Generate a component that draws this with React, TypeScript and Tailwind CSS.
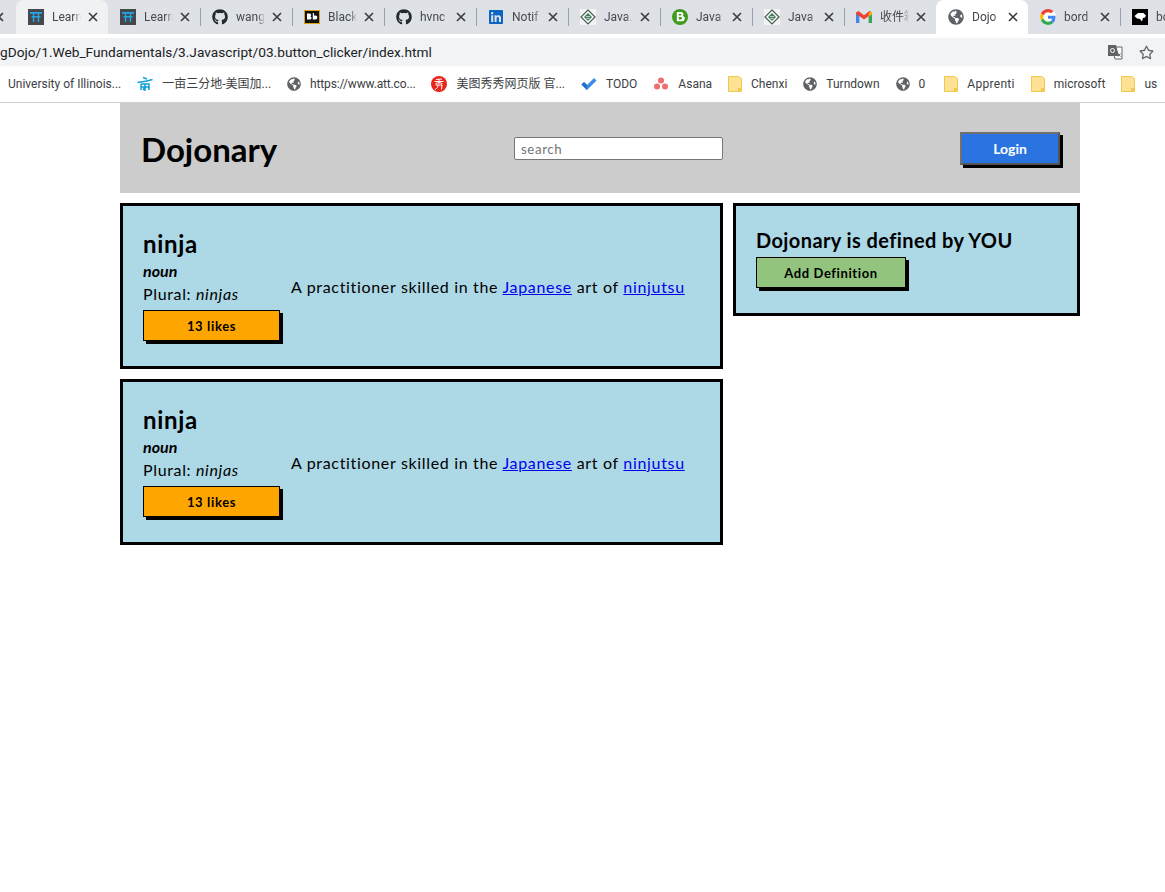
import React from "react";
import { FaGithub, FaLinkedin, FaGlobeAmericas, FaRegStar } from "react-icons/fa";

const Globe = ({ s = 16 }: { s?: number }) => <FaGlobeAmericas size={s} color="#5f6368" />;

const Torii = () => (
  <svg width="16" height="16" viewBox="0 0 16 16">
    <rect width="16" height="16" fill="#45474a" />
    <path d="M2 3h12v1.800H2zM3.500 7h9v1.500h-9zM4.800 4h1.500v9H4.800zM9.700 4h1.500v9H9.700z" fill="#23a6e8" />
  </svg>
);
const Bb = () => (
  <svg width="16" height="14" viewBox="0 0 16 14">
    <rect x="0.500" y="0.500" width="15" height="13" fill="#111" stroke="#d9a21b" />
    <path d="M3 3.500h2.300a1.400 1.400 0 0 1 .9 2.700 1.600 1.600 0 0 1-.7 3.300H3zM8.800 3h1.100v2.500h1.500a2 2 0 0 1 0 4H8.800z" fill="#fff" />
  </svg>
);
const JavaDiamond = () => (
  <svg width="16" height="16" viewBox="0 0 16 16">
    <rect width="16" height="16" fill="#f3f3f3" />
    <path d="M8 1 15 8 8 15 1 8z" fill="#fff" stroke="#46594d" strokeWidth="1.200" />
    <path d="M8 4 12 8 8 12 4 8z" fill="#3f7f5c" />
    <path d="M6 7.500h4M6.500 9.500h3" stroke="#cfe0d5" strokeWidth="0.900" />
  </svg>
);
const GreenB = () => (
  <svg width="16" height="16" viewBox="0 0 16 16">
    <circle cx="8" cy="8" r="8" fill="#3f9a1d" />
    <path fillRule="evenodd" d="M4.800 3h4.400a2.300 2.300 0 0 1 1.500 4 2.600 2.600 0 0 1-1.300 5.200H4.800zM6.800 4.700v1.800h1.700a.9.900 0 0 0 0-1.800zM6.800 8.100v2.400h2a1.200 1.200 0 0 0 0-2.400z" fill="#fff" />
  </svg>
);
const Gmail = () => (
  <svg width="16" height="12" viewBox="0 0 16 12">
    <path d="M0 1.500V12h3.200V5L8 8.500 12.800 5v7H16V1.500L13.500 0 8 4.200 2.500 0z" fill="#ea4335" />
    <path d="M0 3v9h3.200V5.500z" fill="#4285f4" />
    <path d="M16 3v9h-3.200V5.500z" fill="#34a853" />
    <path d="M12.800 2 16 0.600V3l-3.200 2.500z" fill="#fbbc05" />
  </svg>
);
const GoogleG = () => (
  <svg width="16" height="16" viewBox="0 0 48 48">
    <circle cx="24" cy="24" r="24" fill="#fff" />
    <path fill="#EA4335" d="M24 9.500c3.500 0 6.700 1.200 9.200 3.600l6.900-6.900C35.900 2.400 30.500 0 24 0 14.600 0 6.500 5.400 2.600 13.200l8 6.200C12.400 13.700 17.700 9.500 24 9.500z" />
    <path fill="#4285F4" d="M46.500 24.500c0-1.600-.1-3.100-.4-4.500H24v9h12.700c-.5 2.900-2.200 5.400-4.700 7.100l7.700 6c4.500-4.200 6.800-10.300 6.800-17.600z" />
    <path fill="#FBBC05" d="M10.500 28.600c-.5-1.400-.8-3-.8-4.600s.3-3.200.8-4.600l-8-6.200C.9 16.500 0 20.100 0 24s.9 7.500 2.600 10.800z" />
    <path fill="#34A853" d="M24 48c6.500 0 11.900-2.100 15.900-5.800l-7.700-6c-2.200 1.400-4.900 2.300-8.200 2.300-6.300 0-11.600-4.200-13.500-9.900l-8 6.200C6.500 42.600 14.600 48 24 48z" />
  </svg>
);
const BlackMark = () => (
  <svg width="16" height="16" viewBox="0 0 16 16">
    <rect width="16" height="16" fill="#000" />
    <path d="M2.500 7 6 4h5.500L14 6.500l-1 2-2 .5-1 3.500L8 10l-3-.5z" fill="#fff" />
  </svg>
);
const CheckIcon = () => (
  <svg width="16" height="14" viewBox="0 0 16 14">
    <path d="M0.500 7.500 3 5l3 3 7-7 2.500 2.500L6 13z" fill="#3a8ee8" />
    <path d="M0.500 7.500 3 5l3 3v5z" fill="#1f6fd0" />
  </svg>
);
const AsanaIcon = () => (
  <svg width="16" height="16" viewBox="0 0 16 16">
    <circle cx="8" cy="4.500" r="3" fill="#f26d6d" />
    <circle cx="4" cy="10.500" r="3" fill="#f26d6d" />
    <circle cx="12" cy="10.500" r="3" fill="#f26d6d" />
  </svg>
);
const Folder = () => (
  <svg width="14" height="16" viewBox="0 0 14 16">
    <path d="M0.500 0.500h10l3 2v13H0.500z" fill="#fde293" stroke="#f2c94c" />
    <rect x="10" y="12" width="3" height="3" fill="#f2c94c" />
  </svg>
);
const DaiIcon = () => (
  <svg width="16" height="16" viewBox="0 0 16 16">
    <path d="M6 1.500 10 3M0.500 6.500C5 6 11 5 15.500 3.500M4 8v6M4 8h8v6M4 11h8M8 8v7M6 14l2-3" stroke="#12a0d8" strokeWidth="1.500" fill="none" />
  </svg>
);
const MeituIcon = () => (
  <svg width="16" height="16" viewBox="0 0 16 16">
    <circle cx="8" cy="8" r="8" fill="#e8261c" />
    <path d="M5 3.500 11 3M3.500 5.500h9M8 3.500V8M8 6 4.500 8M8 6l3.500 2M4.500 9h6.500l-.5 4.500M7 9c0 2-1 3.500-3 4.500" stroke="#fff" strokeWidth="1" fill="none" />
  </svg>
);
const Translate = () => (
  <svg width="16" height="16" viewBox="0 0 16 16">
    <path d="M5 3h10v12H8z" fill="#fff" stroke="#5f6368" />
    <path d="M1 1h8l3 11H1z" fill="#5f6368" />
    <circle cx="5.500" cy="6.500" r="2" fill="none" stroke="#fff" />
    <path d="M11 9.500l2.500 3M13.500 9.500l-2.500 3" stroke="#5f6368" />
  </svg>
);

const tabs: { icon: React.ReactNode; title: string; active?: boolean; hover?: boolean }[] = [
  { icon: <Torii />, title: "Learn", hover: true },
  { icon: <Torii />, title: "Learn" },
  { icon: <FaGithub size={16} color="#24292e" />, title: "wang" },
  { icon: <Bb />, title: "Black" },
  { icon: <FaGithub size={16} color="#24292e" />, title: "hvnc" },
  { icon: <FaLinkedin size={16} color="#0a66c2" />, title: "Notif" },
  { icon: <JavaDiamond />, title: "Java.l" },
  { icon: <GreenB />, title: "Java S" },
  { icon: <JavaDiamond />, title: "Java -" },
  { icon: <Gmail />, title: "收件箱" },
  { icon: <Globe />, title: "Dojo", active: true },
  { icon: <GoogleG />, title: "bord" },
  { icon: <BlackMark />, title: "bo" },
];

const bookmarks: { icon?: React.ReactNode; title: string; cls?: string }[] = [
  { title: "University of Illinois..." },
  { icon: <DaiIcon />, title: "一亩三分地-美国加..." },
  { icon: <Globe s={14} />, title: "https://www.att.co...", cls: "tracking-[-0.15px]" },
  { icon: <MeituIcon />, title: "美图秀秀网页版 官..." },
  { icon: <CheckIcon />, title: "TODO" },
  { icon: <AsanaIcon />, title: "Asana" },
  { icon: <Folder />, title: "Chenxi" },
  { icon: <Globe s={14} />, title: "Turndown" },
  { icon: <Globe s={14} />, title: "0", cls: "pr-[3px]" },
  { icon: <Folder />, title: "Apprenti", cls: "tracking-[0.3px]" },
  { icon: <Folder />, title: "microsoft" },
  { icon: <Folder />, title: "us" },
];

const CloseX = () => (
  <svg width="10" height="10" viewBox="0 0 10 10" className="shrink-0">
    <path d="M1 1l8 8M9 1l-8 8" stroke="#3c4043" strokeWidth="1.700" />
  </svg>
);

const comic = "font-['Comic_Sans_MS','Lato','Noto_Sans',sans-serif]";

function Definition() {
  return (
    <div className="flex h-[166px] w-[603px] items-center border-[3px] border-black bg-[#add8e6] pl-[20px]">
      <div className="w-[148px] shrink-0 self-start pt-[20px]">
        <h2 className="text-[24px] font-bold leading-[36px] tracking-[0.7px] text-black">ninja</h2>
        <p className="-mt-[1px] text-[16px] font-bold italic leading-[20px] text-black">noun</p>
        <p className="mt-[1px] text-[16px] leading-[24px] tracking-[0.65px] text-black">
          Plural: <i>ninjas</i>
        </p>
        <button className="mt-[4px] h-[31px] w-[137px] border border-black bg-[#ffa500] pt-[2px] text-[13px] font-bold tracking-[0.65px] text-black shadow-[3px_3px_0_#000]">
          13 likes
        </button>
      </div>
      <p className="pt-[1px] text-[16px] leading-[24px] tracking-[0.67px] text-black">
        A practitioner skilled in the <a href="#" className="text-[#0000ee] underline">Japanese</a> art of{" "}
        <a href="#" className="text-[#0000ee] underline">ninjutsu</a>
      </p>
    </div>
  );
}

export default function App() {
  return (
    <div className="min-h-[892px] overflow-hidden bg-white">
      <div className="font-['Roboto','Noto_Sans_CJK_SC',sans-serif]">
        <div className="flex h-[34px] items-start overflow-hidden bg-[#dee1e6]">
          <div className="flex h-[34px] w-[16px] shrink-0 items-center">
            <span className="-ml-[6px] flex"><CloseX /></span>
          </div>
          {tabs.map((t, i) => (
            <div
              key={i}
              className={
                "relative flex h-[34px] w-[92px] shrink-0 items-center rounded-t-[8px] pl-[12px] " +
                (t.active ? "bg-white" : t.hover ? "bg-[#eff1f3]" : "")
              }
            >
              <div className="flex w-[16px] shrink-0 justify-center">{t.icon}</div>
              <span className="ml-[8px] w-[29px] overflow-hidden whitespace-nowrap text-[12px] text-[#45494d] [mask-image:linear-gradient(to_right,black_75%,transparent)]">
                {t.title}
              </span>
              <span className="ml-[7px] flex"><CloseX /></span>
              {i >= 1 && i !== 9 && i !== 10 && (
                <span className="absolute -right-px top-[8px] h-[18px] w-px bg-[#9aa0a6]" />
              )}
            </div>
          ))}
        </div>
        <div className="flex h-[32px] items-end bg-white">
          <div className="flex h-[28px] w-full items-center bg-[#f1f3f4] pr-[11px]">
            <span className="flex-1 overflow-hidden whitespace-nowrap text-[13.700px] text-[#202124]">gDojo/1.Web_Fundamentals/3.Javascript/03.button_clicker/index.html</span>
            <Translate />
            <FaRegStar size={15} color="#5f6368" className="ml-[16px]" />
          </div>
        </div>
        <div className="flex h-[37px] items-center gap-[16px] overflow-hidden whitespace-nowrap border-b border-[#cfd1d4] bg-white pl-[8px]">
          {bookmarks.map((b, i) => (
            <div key={i} className={"flex shrink-0 items-center gap-[9px] text-[12px] text-[#3c4043] " + (b.cls ?? "")}>
              {b.icon}
              <span>{b.title}</span>
            </div>
          ))}
        </div>
      </div>

      <div className={"ml-[120px] w-[960px] " + comic}>
        <header className="flex h-[90px] items-center bg-[#cccccc]">
          <h1 className="ml-[21px] w-[373px] pt-[4px] text-[33px] font-bold text-black">Dojonary</h1>
          <input
            placeholder="search"
            className="mt-[1px] h-[23px] w-[209px] rounded-[2px] border border-[#767676] bg-white px-[6px] text-[13.300px] tracking-[0.6px] placeholder:text-[#757575]"
          />
          <button className="mt-[1px] ml-[237px] h-[33px] w-[100px] border-2 border-t-[#707070] border-l-[#707070] border-r-[#555] border-b-[#555] bg-[#2a74e2] text-[14px] font-bold text-white shadow-[3px_3px_0_#000]">
            Login
          </button>
        </header>
        <div className="mt-[10px] flex items-start gap-[10px]">
          <div className="flex flex-col gap-[10px]">
            <Definition />
            <Definition />
          </div>
          <aside className="h-[113px] w-[347px] border-[3px] border-black bg-[#add8e6] pl-[20px] pt-[20px]">
            <h3 className="text-[20px] font-bold leading-[28px] tracking-[0.4px] text-black">Dojonary is defined by YOU</h3>
            <button className="mt-[3px] h-[31px] w-[150px] border border-black bg-[#93c47d] pt-[2px] text-[13px] font-bold tracking-[0.6px] text-black shadow-[3px_3px_0_#000]">
              Add Definition
            </button>
          </aside>
        </div>
      </div>
    </div>
  );
}
